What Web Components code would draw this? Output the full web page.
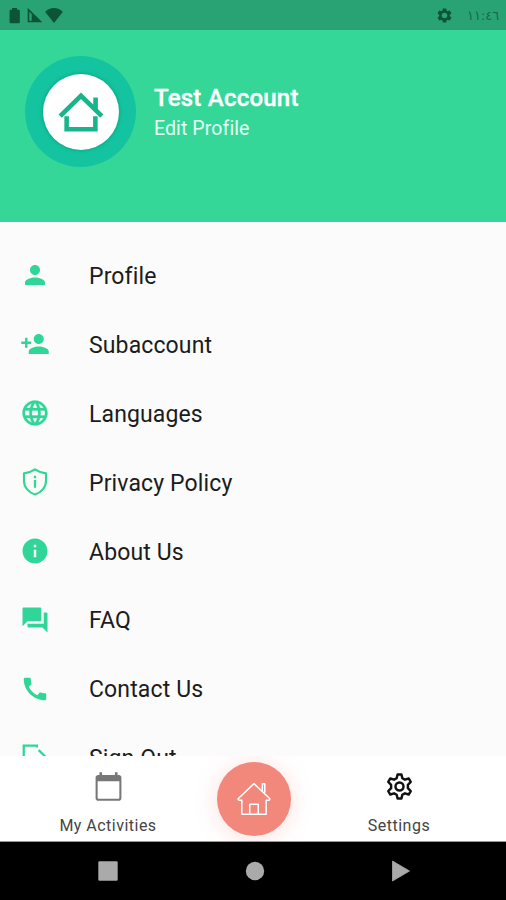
<!DOCTYPE html>
<html lang="en">
<head>
<meta charset="utf-8">
<title>Settings</title>
<style>
html,body{margin:0;height:100%}
body{font-family:Roboto,"Liberation Sans",sans-serif;overflow:hidden;background:#fafbfa}
</style>
</head>
<body>
<app-screen></app-screen>
<script>
const ICONS = {
  person:'<path d="M12 12c2.21 0 4-1.79 4-4s-1.79-4-4-4-4 1.79-4 4 1.79 4 4 4zm0 2c-2.67 0-8 1.34-8 4v2h16v-2c0-2.66-5.33-4-8-4z"/>',
  personAdd:'<path d="M15 12c2.21 0 4-1.79 4-4s-1.79-4-4-4-4 1.79-4 4 1.79 4 4 4zm-9-2V7H4v3H1v2h3v3h2v-3h3v-2H6zm9 4c-2.67 0-8 1.34-8 4v2h16v-2c0-2.66-5.33-4-8-4z"/>',
  globe:'<path stroke="currentColor" stroke-width=".25" d="M11.99 2C6.47 2 2 6.48 2 12s4.47 10 9.99 10C17.52 22 22 17.52 22 12S17.52 2 11.99 2zm6.93 6h-2.95c-.32-1.25-.78-2.45-1.38-3.56 1.84.63 3.37 1.91 4.33 3.56zM12 4.04c.83 1.2 1.48 2.53 1.91 3.96h-3.82c.43-1.43 1.08-2.76 1.91-3.96zM4.26 14C4.1 13.36 4 12.69 4 12s.1-1.36.26-2h3.38c-.08.66-.14 1.32-.14 2s.06 1.34.14 2H4.26zm.82 2h2.95c.32 1.25.78 2.45 1.38 3.56-1.84-.63-3.37-1.9-4.33-3.56zm2.95-8H5.08c.96-1.66 2.49-2.93 4.33-3.56C8.81 5.55 8.35 6.75 8.03 8zM12 19.96c-.83-1.2-1.48-2.53-1.91-3.96h3.82c-.43 1.43-1.08 2.76-1.91 3.96zM14.34 14H9.66c-.09-.66-.16-1.32-.16-2s.07-1.35.16-2h4.68c.09.65.16 1.32.16 2s-.07 1.34-.16 2zm.25 5.56c.6-1.11 1.06-2.31 1.38-3.56h2.95c-.96 1.65-2.49 2.93-4.33 3.56zM16.36 14c.08-.66.14-1.32.14-2s-.06-1.34-.14-2h3.38c.16.64.26 1.31.26 2s-.1 1.36-.26 2h-3.38z"/>',
  shield:'<path d="M12 1.9Q16 4.600 20.800 5.100V11.200c0 5-3.800 9.300-8.800 10.800C7 20.500 3.200 16.200 3.200 11.200V5.100Q8 4.600 12 1.900z" fill="none" stroke="currentColor" stroke-width="1.700" stroke-linejoin="round"/><path d="M11.100 7h1.800v1.900h-1.800zM11.100 10.300h1.800v6.200h-1.800z"/>',
  info:'<path d="M12 2C6.48 2 2 6.48 2 12s4.48 10 10 10 10-4.480 10-10S17.520 2 12 2zm1 15h-2v-6h2v6zm0-8h-2V7h2v2z"/>',
  forum:'<path d="M21 6h-2v9H6v2c0 .55.45 1 1 1h11l4 4V7c0-.55-.45-1-1-1zm-4 6V3c0-.55-.45-1-1-1H3c-.55 0-1 .45-1 1v14l4-4h10c.55 0 1-.45 1-1z"/>',
  phone:'<path d="M20.010 15.380c-1.230 0-2.420-.200-3.530-.560-.350-.120-.740-.030-1.010.240l-1.570 1.970c-2.830-1.350-5.480-3.900-6.890-6.830l1.950-1.660c.270-.280.350-.670.240-1.020-.370-1.110-.560-2.300-.560-3.530 0-.540-.450-.990-.990-.990H4.190C3.650 3 3 3.240 3 3.990 3 13.280 10.730 21 20.010 21c.71 0 .990-.630.990-1.180v-3.450c0-.540-.450-.990-.990-.990z"/>',
  exit:'<path d="M13.500 4.300V2.900H3V21h10.500v-3M15 6.500l5.500 5.500-5.500 5.500M8 12h11.500" fill="none" stroke="currentColor" stroke-width="1.800"/>',
  gear:'<path d="M19.430 12.980c.04-.32.07-.64.07-.98s-.03-.66-.07-.98l2.110-1.650c.190-.150.240-.420.120-.640l-2-3.460c-.120-.220-.390-.300-.610-.220l-2.490 1c-.520-.400-1.080-.730-1.690-.980l-.380-2.650C14.460 2.180 14.250 2 14 2h-4c-.250 0-.460.180-.490.420l-.380 2.650c-.610.250-1.170.590-1.690.980l-2.490-1c-.230-.090-.490 0-.610.220l-2 3.460c-.130.220-.070.490.120.640l2.110 1.650c-.040.320-.070.650-.070.980s.030.660.070.980l-2.110 1.650c-.190.150-.240.420-.120.640l2 3.460c.120.220.390.300.610.220l2.490-1c.520.400 1.080.730 1.690.980l.380 2.650c.030.240.240.420.490.420h4c.250 0 .460-.180.490-.420l.380-2.650c.610-.250 1.170-.590 1.690-.980l2.490 1c.230.090.490 0 .610-.220l2-3.460c.120-.220.070-.490-.120-.640l-2.110-1.650zM12 16c-2.210 0-4-1.790-4-4s1.790-4 4-4 4 1.790 4 4-1.790 4-4 4z"/>',
  gearLine:'<g fill="none" stroke="currentColor" stroke-width="1.900" stroke-linejoin="round"><path d="M10.500 2.700h3l.7 2.900 2 1.100 2.900-.9 1.600 2.700-2.200 2.200v2.600l2.200 2.200-1.600 2.700-2.900-.9-2 1.100-.7 2.900h-3l-.7-2.900-2-1.100-2.900.9-1.600-2.700 2.200-2.200v-2.600L3.300 8.500l1.600-2.700 2.900.9 2-1.100z"/><circle cx="12" cy="12" r="3.100"/></g>',
  calendar:'<path d="M20 3h-1V1h-2v2H7V1H5v2H4c-1.100 0-2 .9-2 2v16c0 1.100.9 2 2 2h16c1.100 0 2-.9 2-2V5c0-1.100-.9-2-2-2zm.4 17.700a.7.700 0 0 1-.7.700H4.300a.7.700 0 0 1-.7-.7V8h16.800z"/>',
  battery:'<path d="M8.500 1.500h7V4H18a1.500 1.500 0 0 1 1.500 1.500v16A1.500 1.500 0 0 1 18 23H6.500A1.500 1.500 0 0 1 5 21.500v-16A1.500 1.500 0 0 1 6.500 4h2z"/>',
  signal:'<path d="M1 1l22 22H1zM3.500 7v13.500H7V10.500z" fill-rule="evenodd"/>',
  wifi:'<path d="M12 22.500L.3 8C3 4.500 7.500 2.500 12 2.500S21 4.500 23.700 8z"/>',
  homeBold:'<path d="M2 14L12 4.200l10 9.800M19 10.700V5M5.100 14v6.300h13.800v-6.300" fill="none" stroke="currentColor" stroke-width="2.200"/>',
  homeLine:'<path d="M4.300 12.800v8.900h5v-6.400h5.400v6.400h5V12.800h1.700q1.100-.4.300-1.300L12 2.300l-9.700 9.200q-.8.900.3 1.300zM9 21.700h6M17.300 6.900V2.300h1.500v5.800" fill="none" stroke="currentColor" stroke-width=".95" stroke-linejoin="round"/>',
  square:'<rect x="2.300" y="2.300" width="19.400" height="19.400" rx="1.200"/>',
  circle:'<circle cx="12" cy="12" r="9.200"/>',
  triangle:'<path d="M3.500 2L20.500 12 3.500 22z" stroke="currentColor" stroke-width=".8" stroke-linejoin="round"/>'
};

function define(name, render) {
  customElements.define(name, class extends HTMLElement {
    connectedCallback() {
      if (this.shadowRoot) return;
      this.attachShadow({mode:'open'}).innerHTML = render(this);
    }
  });
}

define('ui-icon', el => `<style>:host{display:block;flex:none;width:var(--size,24px);height:var(--size,24px)}svg{display:block;width:100%;height:100%}</style>
<svg viewBox="0 0 24 24" fill="currentColor" aria-hidden="true">${ICONS[el.getAttribute('name')]}</svg>`);

define('status-bar', () => `<style>
:host{display:flex;align-items:center;box-sizing:border-box;height:30px;padding:0 9px 0 6px;background:#2aa374;color:#0b5436}
.b{--size:17px}.s{--size:16px;margin-left:4px}.w{--size:18px;margin-left:2px}
.g{--size:17px;margin-left:auto;color:#0b5436}
time{font:13px "DejaVu Sans",sans-serif;letter-spacing:-.7px;margin-left:14px;width:30px;color:#146b48;text-align:left;white-space:nowrap}
</style><ui-icon class="b" name="battery"></ui-icon><ui-icon class="s" name="signal"></ui-icon><ui-icon class="w" name="wifi"></ui-icon><ui-icon class="g" name="gear"></ui-icon><time>١١:٤٦</time>`);

define('profile-header', () => `<style>
:host{display:flex;align-items:flex-start;box-sizing:border-box;height:192px;padding:26px 25px 0;background:#35d799;color:#fff}
.ring{width:111px;height:111px;border-radius:50%;background:#14c4a0;display:grid;place-items:center;flex:none}
.disc{width:76px;height:76px;border-radius:50%;background:#fff;box-shadow:0 0 4px #079c7e;display:grid;place-items:center;color:#18b58c;--size:50px}
.txt{margin:27px 0 0 18px;display:flex;flex-direction:column;white-space:nowrap}
.name{font-size:24px;line-height:30px;font-weight:500;letter-spacing:.22px;-webkit-text-stroke:.35px}
.sub{font-size:19.500px;line-height:31px;letter-spacing:.1px;color:#e6fff4}
</style><div class="ring"><div class="disc"><ui-icon name="homeBold"></ui-icon></div></div>
<div class="txt"><span class="name"><slot name="name"></slot></span><span class="sub"><slot name="action"></slot></span></div>`);

define('menu-item', el => `<style>
:host{display:flex;align-items:center;height:68.900px;padding-left:20px;gap:39px;color:#1c1c1c;font-size:23px;letter-spacing:.13px;white-space:nowrap;flex:none}
ui-icon{--size:30px;color:#30d698;margin-bottom:2.500px}
</style><ui-icon name="${el.getAttribute('icon')}"></ui-icon><span><slot></slot></span>`);

define('menu-list', () => `<style>:host{display:flex;flex-direction:column;box-sizing:border-box;flex:1;min-height:0;overflow:hidden;padding-top:20px;background:#fafbfa}</style><slot></slot>`);

define('nav-item', el => `<style>
:host{display:flex;flex-direction:column;align-items:center;width:145px;padding-top:15px;box-sizing:border-box;color:var(--tint);white-space:nowrap}
ui-icon{--size:31px}span{color:#444;font-size:16px;line-height:20px;margin-top:14px;letter-spacing:.48px}
</style><ui-icon name="${el.getAttribute('icon')}"></ui-icon><span><slot></slot></span>`);

define('home-button', () => `<style>
:host{display:flex;justify-content:center;width:146px;padding-top:6px;box-sizing:border-box}
div{width:74px;height:74px;border-radius:50%;background:#f2877b;color:#fff;box-shadow:0 2px 22px rgba(242,135,123,.28);display:grid;place-items:center;--size:38px}
</style><div><ui-icon name="homeLine"></ui-icon></div>`);

define('bottom-nav', () => `<style>:host{display:flex;justify-content:center;height:86px;box-sizing:border-box;background:#fff;border-bottom:1px solid #999;flex:none;overflow:hidden;padding-left:1px}</style><slot></slot>`);

define('system-nav', () => `<style>
:host{display:flex;justify-content:center;align-items:center;box-sizing:border-box;height:58px;padding-left:3px;background:#000;color:#aaa;gap:122.500px;flex:none;--size:24px}
</style><ui-icon name="square"></ui-icon><ui-icon name="circle"></ui-icon><ui-icon name="triangle"></ui-icon>`);

define('app-screen', () => `<style>
:host{display:flex;flex-direction:column;width:506px;height:900px;overflow:hidden}
status-bar,profile-header{flex:none}
</style>
<status-bar></status-bar>
<profile-header><span slot="name">Test Account</span><span slot="action">Edit Profile</span></profile-header>
<menu-list>
<menu-item icon="person">Profile</menu-item>
<menu-item icon="personAdd">Subaccount</menu-item>
<menu-item icon="globe">Languages</menu-item>
<menu-item icon="shield">Privacy Policy</menu-item>
<menu-item icon="info">About Us</menu-item>
<menu-item icon="forum">FAQ</menu-item>
<menu-item icon="phone">Contact Us</menu-item>
<menu-item icon="exit">Sign Out</menu-item>
</menu-list>
<bottom-nav>
<nav-item icon="calendar" style="--tint:#777">My Activities</nav-item>
<home-button></home-button>
<nav-item icon="gearLine" style="--tint:#111">Settings</nav-item>
</bottom-nav>
<system-nav></system-nav>`);
</script>
</body>
</html>
